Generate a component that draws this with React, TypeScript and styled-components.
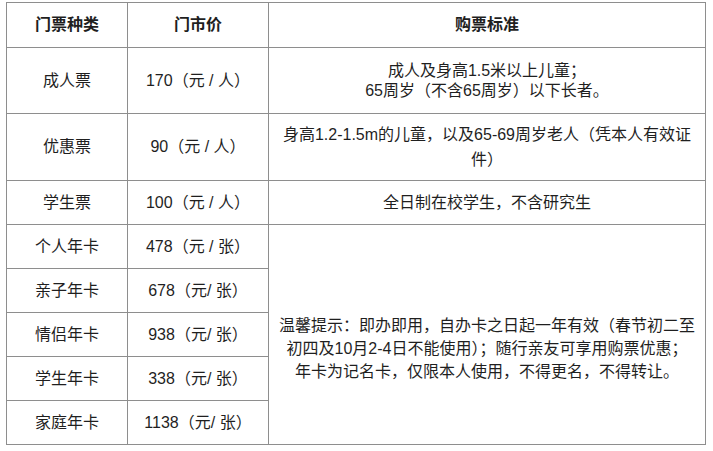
import styled, { createGlobalStyle } from "styled-components";

const GlobalStyle = createGlobalStyle`
  html, body {
    margin: 0;
    padding: 0;
    background: #ffffff;
  }
  body {
    font-family: "Liberation Sans", "Noto Sans CJK SC", sans-serif;
    color: #1f1f1f;
  }
`;

type Row = { name: string; price: string; rule?: React.ReactNode; height: number; lead?: number };

const rows: Row[] = [
  {
    name: "成人票",
    price: "170（元 / 人）",
    rule: (
      <>
        成人及身高1.5米以上儿童；
        <br />
        65周岁（不含65周岁）以下长者。
      </>
    ),
    height: 66,
    lead: 20,
  },
  {
    name: "优惠票",
    price: "90（元 / 人）",
    rule: (
      <>
        身高1.2-1.5m的儿童，以及65-69周岁老人（凭本人有效证
        <br />
        件）
      </>
    ),
    height: 67,
    lead: 25,
  },
  { name: "学生票", price: "100（元 / 人）", rule: "全日制在校学生，不含研究生", height: 44 },
];

const cards: Row[] = [
  { name: "个人年卡", price: "478（元 / 张）", height: 44 },
  { name: "亲子年卡", price: "678（元/ 张）", height: 44 },
  { name: "情侣年卡", price: "938（元/ 张）", height: 44 },
  { name: "学生年卡", price: "338（元/ 张）", height: 44 },
  { name: "家庭年卡", price: "1138（元/ 张）", height: 44 },
];

const App = () => {
  return (
    <Page>
      <GlobalStyle />
      <Table>
        <colgroup>
          <col style={{ width: 121 }} />
          <col style={{ width: 141 }} />
          <col />
        </colgroup>
        <tbody>
          <Tr h={45}>
            <Head>门票种类</Head>
            <Head>门市价</Head>
            <Head>购票标准</Head>
          </Tr>
          {rows.map((r) => (
            <Tr key={r.name} h={r.height}>
              <Cell>{r.name}</Cell>
              <Cell>{r.price}</Cell>
              <Cell lead={r.lead}>{r.rule}</Cell>
            </Tr>
          ))}
          {cards.map((c, i) => (
            <Tr key={c.name} h={c.height}>
              <Cell>{c.name}</Cell>
              <Cell>{c.price}</Cell>
              {i === 0 && (
                <Note rowSpan={cards.length}>
                  温馨提示：即办即用，自办卡之日起一年有效（春节初二至
                  <br />
                  初四及10月2-4日不能使用）；随行亲友可享用购票优惠；
                  <br />
                  年卡为记名卡，仅限本人使用，不得更名，不得转让。
                </Note>
              )}
            </Tr>
          ))}
        </tbody>
      </Table>
    </Page>
  );
};

export default App;

const Page = styled.div`
  padding: 2px 0 0 6px;
`;

const Table = styled.table`
  width: 700px;
  border-collapse: collapse;
  table-layout: fixed;
  font-size: 16px;
`;

const Tr = styled.tr<{ h: number }>`
  height: ${(p) => p.h}px;
`;

const Cell = styled.td<{ lead?: number }>`
  border: 1px solid #8e8e8e;
  padding: 0 6px;
  text-align: center;
  vertical-align: middle;
  line-height: ${(p) => p.lead ?? 20}px;
  white-space: nowrap;
`;

const Head = styled(Cell).attrs({ as: "td" })`
  font-weight: 700;
`;

const Note = styled.td`
  border: 1px solid #8e8e8e;
  padding: 28px 6px 0;
  text-align: center;
  vertical-align: middle;
  line-height: 23px;
  white-space: nowrap;
`;
